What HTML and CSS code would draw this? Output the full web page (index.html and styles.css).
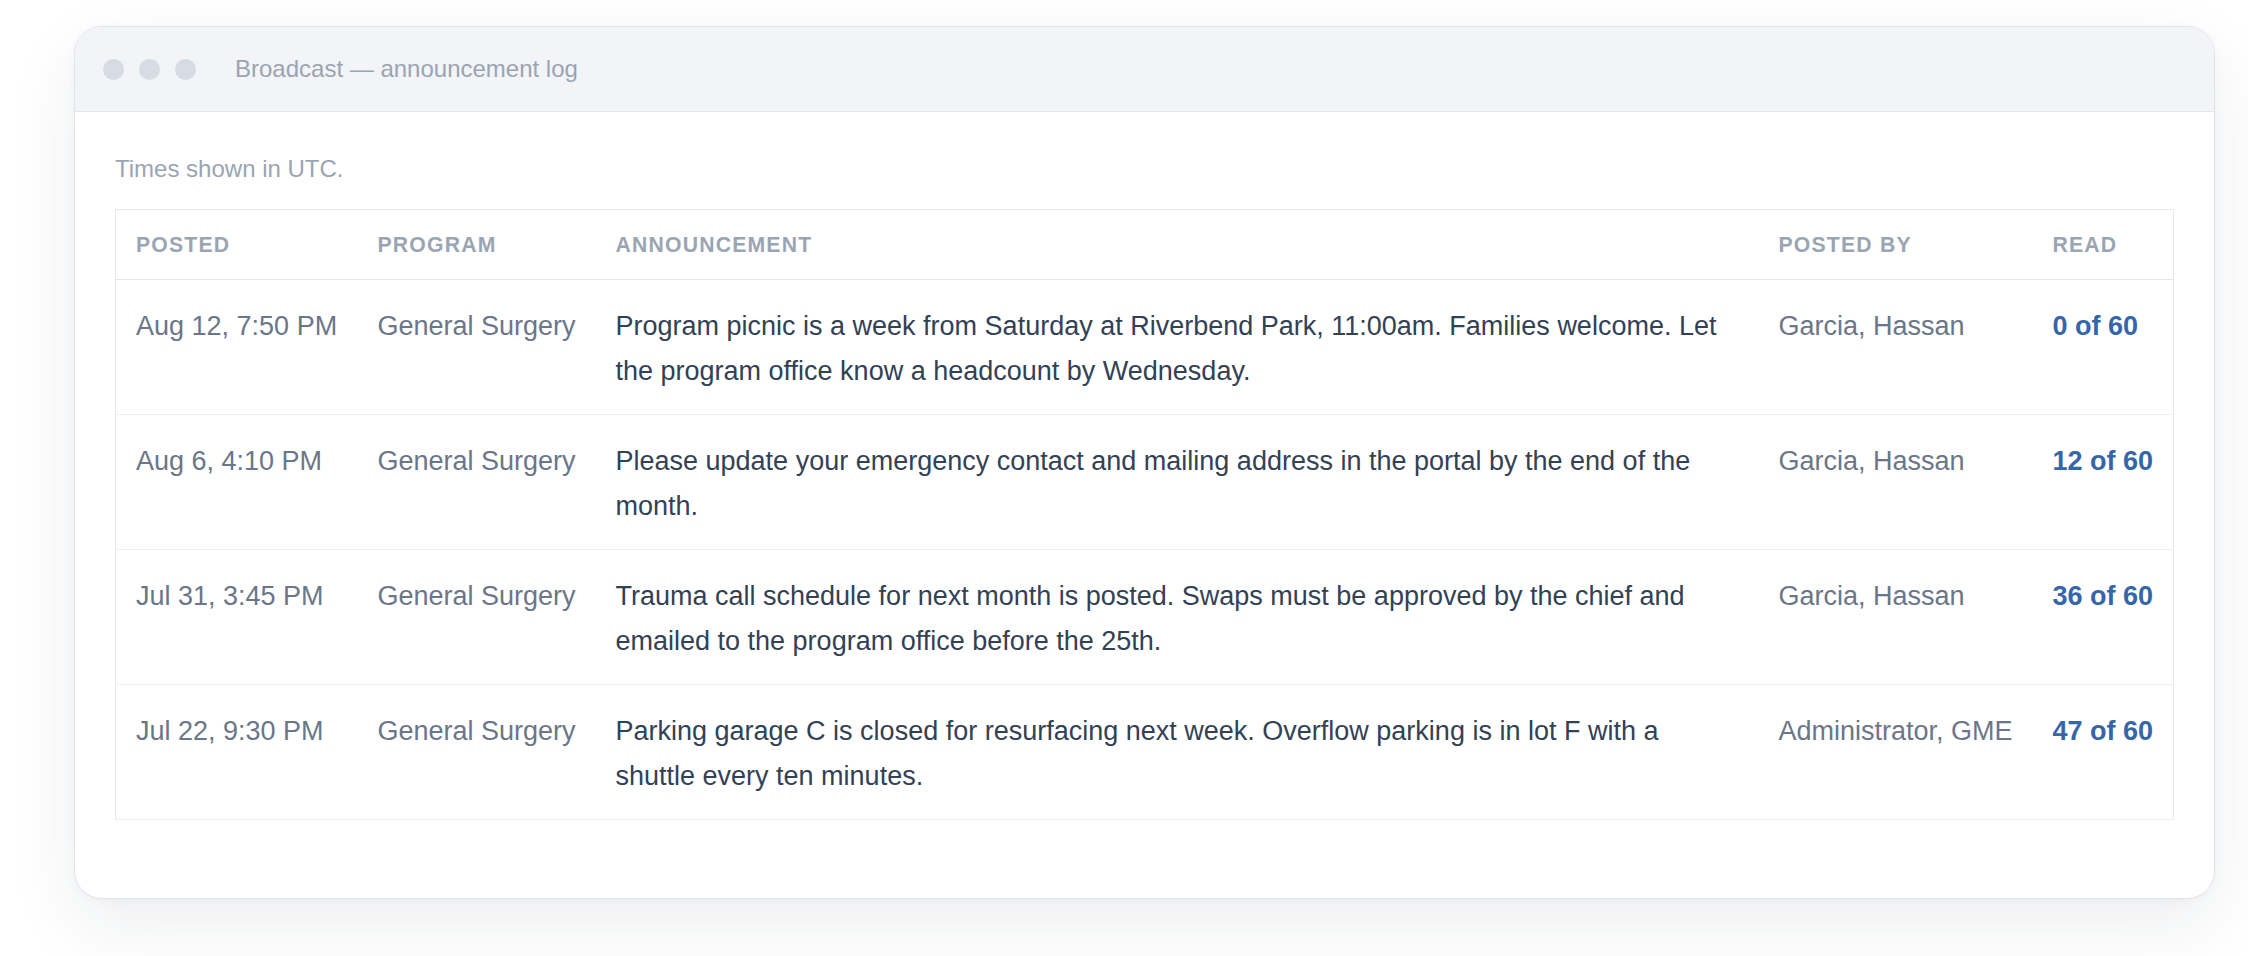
FILE: index.html
```html
<!DOCTYPE html>
<html lang="en">
<head>
  <meta charset="UTF-8">
  <meta name="viewport" content="width=device-width, initial-scale=1.0">
  <title>Broadcast — announcement log</title>
  <link rel="stylesheet" href="styles.css">
</head>
<body>
  <div class="window">
    <div class="titlebar">
      <span class="dot"></span>
      <span class="dot"></span>
      <span class="dot"></span>
      <span class="window-title">Broadcast — announcement log</span>
    </div>
    <div class="content">
      <p class="note">Times shown in UTC.</p>
      <table class="log">
        <colgroup>
          <col class="col-posted">
          <col class="col-program">
          <col class="col-text">
          <col class="col-author">
          <col class="col-read">
        </colgroup>
        <thead>
          <tr>
            <th>Posted</th>
            <th>Program</th>
            <th>Announcement</th>
            <th>Posted by</th>
            <th>Read</th>
          </tr>
        </thead>
        <tbody>
          <tr>
            <td class="muted">Aug 12, 7:50 PM</td>
            <td class="muted">General Surgery</td>
            <td class="text">Program picnic is a week from Saturday at Riverbend Park, 11:00am. Families welcome. Let the program office know a headcount by Wednesday.</td>
            <td class="muted">Garcia, Hassan</td>
            <td class="read">0 of 60</td>
          </tr>
          <tr>
            <td class="muted">Aug 6, 4:10 PM</td>
            <td class="muted">General Surgery</td>
            <td class="text">Please update your emergency contact and mailing address in the portal by the end of the month.</td>
            <td class="muted">Garcia, Hassan</td>
            <td class="read">12 of 60</td>
          </tr>
          <tr>
            <td class="muted">Jul 31, 3:45 PM</td>
            <td class="muted">General Surgery</td>
            <td class="text">Trauma call schedule for next month is posted. Swaps must be approved by the chief and emailed to the program office before the 25th.</td>
            <td class="muted">Garcia, Hassan</td>
            <td class="read">36 of 60</td>
          </tr>
          <tr>
            <td class="muted">Jul 22, 9:30 PM</td>
            <td class="muted">General Surgery</td>
            <td class="text">Parking garage C is closed for resurfacing next week. Overflow parking is in lot F with a shuttle every ten minutes.</td>
            <td class="muted">Administrator, GME</td>
            <td class="read">47 of 60</td>
          </tr>
        </tbody>
      </table>
    </div>
  </div>
</body>
</html>
```

FILE: styles.css
```css
body {
  margin: 0;
  padding: 26px 33px 60px 74px;
  font-family: "Liberation Sans", Arial, sans-serif;
  background-color: #ffffff;
  color: #334155;
}
.window {
  background-color: #ffffff;
  border: 1px solid #e1e4ea;
  border-radius: 28px;
  overflow: hidden;
  box-shadow: 0 26px 70px rgba(30, 41, 59, 0.08), 0 2px 8px rgba(30, 41, 59, 0.03);
}
.titlebar {
  display: flex;
  align-items: center;
  height: 84px;
  padding-left: 28px;
  gap: 15px;
  background-color: #f3f4f7;
  border-bottom: 1px solid #e1e4ea;
}
.dot {
  width: 21px;
  height: 21px;
  border-radius: 50%;
  background-color: #d6dce4;
}
.window-title {
  margin-left: 24px;
  font-size: 24px;
  color: #9aa4b2;
}
.content {
  padding: 40px 40px 78px 40px;
}
.note {
  margin: 0 0 24px 0;
  font-size: 24px;
  line-height: 33px;
  color: #9aa4b2;
}
.log {
  width: 100%;
  table-layout: fixed;
  border-collapse: collapse;
  border: 1px solid #e6e8ed;
}
.col-posted { width: 242px; }
.col-program { width: 238px; }
.col-text { width: 1163px; }
.col-author { width: 274px; }
.col-read { width: 141px; }
.log th {
  padding: 22px 20px;
  text-align: left;
  font-size: 21.2px;
  line-height: 25px;
  font-weight: bold;
  letter-spacing: 1.2px;
  text-transform: uppercase;
  color: #9aa5b3;
  border-bottom: 1px solid #e3e6ec;
}
.log td {
  padding: 24px 20px 20px 20px;
  vertical-align: top;
  font-size: 27px;
  line-height: 45px;
  border-bottom: 1px solid #edf0f4;
}
.log td.muted {
  white-space: nowrap;
  color: #6b7689;
}
.log td.text {
  color: #334155;
}
.log td.read {
  white-space: nowrap;
  font-weight: bold;
  color: #3566a9;
}
```
